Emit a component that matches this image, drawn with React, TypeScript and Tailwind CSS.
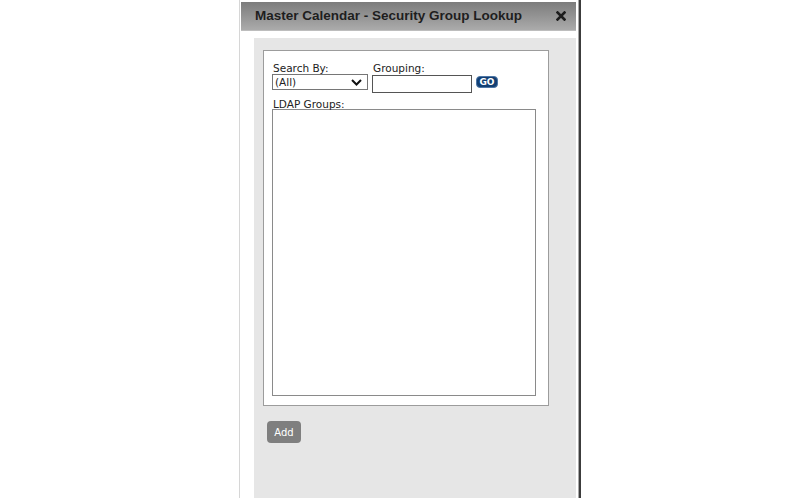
import React from "react";

const ui = { fontFamily: '"DejaVu Sans", Verdana, sans-serif' };

const App = () => {
  return (
    <div className="w-[812px] h-[498px] bg-white overflow-hidden">
      <div className="ml-[239px] w-[342px] h-[498px] border-l border-[#d6d6d6] border-r-2 border-r-[#3c3c3c]">
        <div className="h-full border-r border-[#a8a8a8] pl-[1px] pr-[2px] pt-[2px]">
          {/* title bar */}
          <div
            className="h-[29px] flex items-center justify-between pl-[14px] pr-[10px] bg-gradient-to-b from-[#7c7c7c] to-[#ababab] border-b border-[#bdbdbd]"
            style={{ fontFamily: '"Liberation Sans", Arial, sans-serif' }}
          >
            <span className="text-[13.5px] font-bold text-[#1e1e1e]">
              Master Calendar - Security Group Lookup
            </span>
            <svg width="10" height="10" viewBox="0 0 10 10">
              <path d="M1.5 1.5 L8.5 8.5 M8.5 1.5 L1.5 8.5" stroke="#1c1c1c" strokeWidth="2.6" strokeLinecap="square" />
            </svg>
          </div>

          {/* body */}
          <div className="mt-[7px] ml-[13px] w-[322px] h-[460px] bg-[#e6e6e6] pt-[12px] pl-[9px]" style={ui}>
            <div className="w-[286px] h-[356px] bg-white border border-[#9c9c9c] pl-[8px] pt-[11px]">
              <div className="flex items-start">
                <div className="flex flex-col">
                  <label className="text-[10.5px] leading-[12px] text-[#222] pl-[1px]">Search By:</label>
                  <div className="w-[96px] h-[16px] border border-[#767676] flex items-center justify-between pl-[2px] pr-[5px]">
                    <span className="text-[10.5px] leading-[12px] text-[#222]">(All)</span>
                    <svg width="11" height="7" viewBox="0 0 11 7">
                      <polyline points="1,1 5.5,5.5 10,1" fill="none" stroke="#111" strokeWidth="2" />
                    </svg>
                  </div>
                </div>
                <div className="flex flex-col ml-[4px]">
                  <label className="text-[10.5px] leading-[12px] text-[#222] pl-[1px]">Grouping:</label>
                  <div className="mt-[1px] w-[100px] h-[18px] border border-[#555] bg-white" />
                </div>
                <button className="ml-[4px] mt-[14px] w-[22px] h-[12px] rounded-[4px] bg-[#123f73] border border-[#4d76a6] text-white text-[9px] leading-[10px] font-bold flex items-center justify-center">
                  GO
                </button>
              </div>
              <div className="mt-[5px] text-[10.5px] leading-[12px] text-[#222] pl-[1px]">LDAP Groups:</div>
              <div className="mt-[-1px] w-[264px] h-[287px] border border-[#8a8a8a] bg-white" />
            </div>
            <button className="mt-[15px] ml-[4px] w-[34px] h-[22px] rounded-[4px] bg-[#7f7f7f] text-white text-[10px] flex items-center justify-center">
              Add
            </button>
          </div>
        </div>
      </div>
    </div>
  );
};

export default App;
